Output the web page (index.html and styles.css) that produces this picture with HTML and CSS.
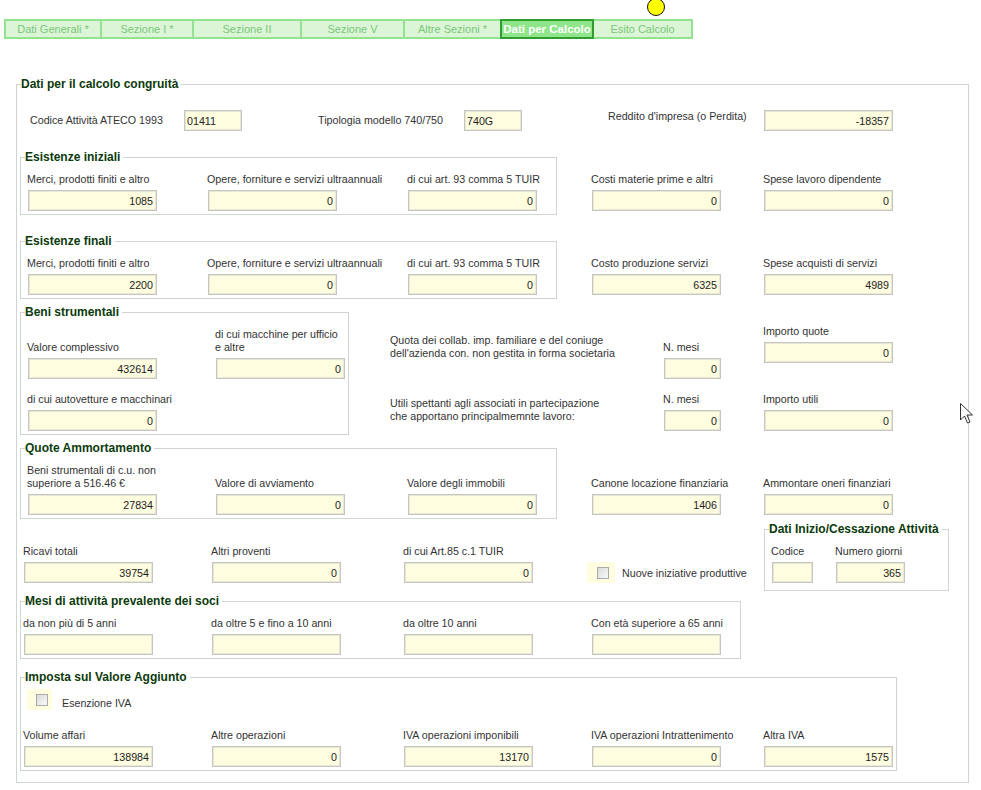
FILE: index.html
```html
<!DOCTYPE html>
<html lang="it">
<head>
<meta charset="utf-8">
<title>Dati per Calcolo</title>
<link rel="stylesheet" href="styles.css">
</head>
<body>
<div class="page">
  <nav class="tabs">
    <span class="tab w1">Dati Generali *</span>
    <span class="tab w2">Sezione I *</span>
    <span class="tab w3">Sezione II</span>
    <span class="tab w4">Sezione V</span>
    <span class="tab w5">Altre Sezioni *</span>
    <span class="tab w6 active">Dati per Calcolo</span>
    <span class="tab w7">Esito Calcolo</span>
  </nav>
  <span class="dot"></span>

  <fieldset class="main">
    <legend>Dati per il calcolo congruità</legend>

    <div class="toprow">
      <span class="tl">Codice Attività ATECO 1993</span>
      <input class="v sm left" value="01411" readonly>
      <span class="tl">Tipologia modello 740/750</span>
      <input class="v sm left" value="740G" readonly>
      <span class="tl up">Reddito d'impresa (o Perdita)</span>
      <input class="v" value="-18357" readonly>
    </div>

    <div class="band b-ei">
      <fieldset class="grp g-wide">
        <legend>Esistenze iniziali</legend>
        <div class="cols c-esist">
          <div class="fld"><label>Merci, prodotti finiti e altro</label><input class="v" value="1085" readonly></div>
          <div class="fld"><label>Opere, forniture e servizi ultraannuali</label><input class="v" value="0" readonly></div>
          <div class="fld"><label>di cui art. 93 comma 5 TUIR</label><input class="v" value="0" readonly></div>
        </div>
      </fieldset>
      <div class="side">
        <div class="fld"><label>Costi materie prime e altri</label><input class="v" value="0" readonly></div>
        <div class="fld"><label>Spese lavoro dipendente</label><input class="v" value="0" readonly></div>
      </div>
    </div>

    <div class="band b-ef">
      <fieldset class="grp g-wide">
        <legend>Esistenze finali</legend>
        <div class="cols c-esist">
          <div class="fld"><label>Merci, prodotti finiti e altro</label><input class="v" value="2200" readonly></div>
          <div class="fld"><label>Opere, forniture e servizi ultraannuali</label><input class="v" value="0" readonly></div>
          <div class="fld"><label>di cui art. 93 comma 5 TUIR</label><input class="v" value="0" readonly></div>
        </div>
      </fieldset>
      <div class="side">
        <div class="fld"><label>Costo produzione servizi</label><input class="v" value="6325" readonly></div>
        <div class="fld"><label>Spese acquisti di servizi</label><input class="v" value="4989" readonly></div>
      </div>
    </div>

    <div class="band b-beni">
      <fieldset class="grp g-beni">
        <legend>Beni strumentali</legend>
        <div class="cols c-beni">
          <div class="fld"><label>Valore complessivo</label><input class="v" value="432614" readonly></div>
          <div class="fld"><label class="l2">di cui macchine per ufficio<br>e altre</label><input class="v" value="0" readonly></div>
          <div class="fld"><label>di cui autovetture e macchinari</label><input class="v" value="0" readonly></div>
        </div>
      </fieldset>
      <div class="beni-r">
        <p class="note n1">Quota dei collab. imp. familiare e del coniuge<br>dell'azienda con. non gestita in forma societaria</p>
        <div class="fld nm1"><label>N. mesi</label><input class="v xs" value="0" readonly></div>
        <div class="fld"><label>Importo quote</label><input class="v" value="0" readonly></div>
        <p class="note n2">Utili spettanti agli associati in partecipazione<br>che apportano principalmemnte lavoro:</p>
        <div class="fld"><label>N. mesi</label><input class="v xs" value="0" readonly></div>
        <div class="fld"><label>Importo utili</label><input class="v" value="0" readonly></div>
      </div>
    </div>

    <div class="band b-quote">
      <fieldset class="grp g-wide">
        <legend>Quote Ammortamento</legend>
        <div class="cols c-quote">
          <div class="fld"><label>Beni strumentali di c.u. non<br>superiore a 516.46 €</label><input class="v" value="27834" readonly></div>
          <div class="fld"><label>Valore di avviamento</label><input class="v" value="0" readonly></div>
          <div class="fld"><label>Valore degli immobili</label><input class="v" value="0" readonly></div>
        </div>
      </fieldset>
      <div class="side">
        <div class="fld"><label>Canone locazione finanziaria</label><input class="v" value="1406" readonly></div>
        <div class="fld"><label>Ammontare oneri finanziari</label><input class="v" value="0" readonly></div>
      </div>
    </div>

    <div class="band b-r">
      <div class="rleft">
        <div class="fld"><label>Ricavi totali</label><input class="v" value="39754" readonly></div>
        <div class="fld"><label>Altri proventi</label><input class="v" value="0" readonly></div>
        <div class="fld"><label>di cui Art.85 c.1 TUIR</label><input class="v" value="0" readonly></div>
        <div class="chk">
          <span class="cbox"><input type="checkbox" class="cb"></span>
          <span class="chk-t">Nuove iniziative produttive</span>
        </div>
      </div>
      <fieldset class="grp g-dati">
        <legend>Dati Inizio/Cessazione Attività</legend>
        <div class="cols c-dati">
          <div class="fld"><label>Codice</label><input class="v cod" value="" readonly></div>
          <div class="fld"><label>Numero giorni</label><input class="v ng" value="365" readonly></div>
        </div>
      </fieldset>
    </div>

    <div class="band b-mesi">
      <fieldset class="grp g-mesi">
        <legend>Mesi di attività prevalente dei soci</legend>
        <div class="cols c-mesi">
          <div class="fld"><label>da non più di 5 anni</label><input class="v" value="" readonly></div>
          <div class="fld"><label>da oltre 5 e fino a 10 anni</label><input class="v" value="" readonly></div>
          <div class="fld"><label>da oltre 10 anni</label><input class="v" value="" readonly></div>
          <div class="fld"><label>Con età superiore a 65 anni</label><input class="v" value="" readonly></div>
        </div>
      </fieldset>
    </div>

    <div class="band b-iva">
      <fieldset class="grp g-iva">
        <legend>Imposta sul Valore Aggiunto</legend>
        <div class="chkrow">
          <span class="cbox cbox-iva"><input type="checkbox" class="cb"></span>
          <span class="chk-iva">Esenzione IVA</span>
        </div>
        <div class="cols c-iva">
          <div class="fld"><label>Volume affari</label><input class="v" value="138984" readonly></div>
          <div class="fld"><label>Altre operazioni</label><input class="v" value="0" readonly></div>
          <div class="fld"><label>IVA operazioni imponibili</label><input class="v" value="13170" readonly></div>
          <div class="fld"><label>IVA operazioni Intrattenimento</label><input class="v" value="0" readonly></div>
          <div class="fld"><label>Altra IVA</label><input class="v" value="1575" readonly></div>
        </div>
      </fieldset>
    </div>
  </fieldset>

  <svg class="cursor" width="15" height="23" viewBox="0 0 15 23" aria-hidden="true">
    <polygon points="1.5,1.5 1.5,18 5.5,14 8.5,21 11,20 8,13 13.5,13" fill="#fff" stroke="#333" stroke-width="1" stroke-linejoin="miter"/>
  </svg>
</div>
</body>
</html>
```

FILE: styles.css
```css
* { box-sizing: border-box; }

body {
  margin: 0;
  background: #fff;
  font-family: "Liberation Sans", Arial, sans-serif;
  font-size: 10.7px;
  color: #333;
}

.page {
  position: relative;
  width: 981px;
  height: 790px;
  overflow: hidden;
}

/* tabs */
.tabs {
  display: flex;
  margin: 19px 0 0 4px;
  height: 20px;
}
.tab {
  height: 20px;
  border: 2px solid #93e28f;
  background: #dcf5d7;
  color: #77c877;
  font-size: 11px;
  line-height: 16px;
  text-align: center;
  white-space: nowrap;
  overflow: hidden;
}
.tab + .tab { margin-left: -2px; }
.tab.active {
  position: relative;
  z-index: 1;
  background: #8fe68a;
  border-color: #2f9e2f;
  color: #fff;
  font-weight: bold;
  font-size: 11.5px;
}
.w1 { width: 98px; }
.w2 { width: 94px; }
.w3 { width: 110px; }
.w4 { width: 105px; }
.w5 { width: 99px; }
.w6 { width: 94px; }
.w7 { width: 101px; }

.dot {
  position: absolute;
  left: 647px;
  top: -2px;
  width: 18px;
  height: 18px;
  border-radius: 50%;
  background: #ffff00;
  border: 1.5px solid #111;
}

.cursor {
  position: absolute;
  left: 959px;
  top: 402px;
}

/* fieldsets */
fieldset {
  margin: 0;
  min-width: 0;
  border: 1px solid #cfd6cf;
  padding: 9px 0 3px;
}
legend {
  margin-left: 4px;
  padding: 0 3px 0 0;
  font-weight: bold;
  font-size: 12px;
  line-height: 13px;
  color: #0b3a0b;
}
.main {
  margin: 39px 0 0 16px;
  width: 953px;
  padding: 0 0 11px;
}

/* inputs */
input.v {
  display: block;
  width: 129px;
  height: 21px;
  margin: 0;
  padding: 0 3px 0 2px;
  border: 1px solid #c6c6bf;
  box-shadow: inset 0 0 0 1px #e8e8d8;
  background: #fffde0;
  font-family: inherit;
  font-size: 10.7px;
  color: #1c1c1c;
  text-align: right;
  outline: none;
}
input.v.left { text-align: left; }
input.v.sm { width: 58px; }
input.v.xs { width: 57px; }
input.v.cod { width: 41px; }
input.v.ng { width: 69px; }

.fld label {
  display: block;
  line-height: 13px;
  margin: 0 0 4px -1px;
  white-space: nowrap;
}

.cols { display: grid; align-items: end; }

/* top row */
.toprow {
  display: grid;
  grid-template-columns: 154px 134px 146px 144px 156px 129px;
  align-items: center;
  margin: 19px 0 0 13px;
  height: 21px;
}
.tl { white-space: nowrap; line-height: 13px; }
.tl.up { align-self: start; }

/* bands */
.band { display: flex; margin-left: 3px; }
.b-ei { margin-top: 20px; }
.b-ef { margin-top: 20px; }
.b-beni { margin-top: 7px; }
.b-quote { margin-top: 7px; }
.b-r { margin-top: 4px; margin-left: 0; }
.b-mesi { margin-top: 4px; }
.b-iva { margin-top: 12px; }

.side {
  display: grid;
  grid-template-columns: 172px 129px;
  align-self: flex-end;
  margin: 0 0 4px 35px;
}

.g-wide { width: 537px; }
.c-esist { grid-template-columns: 180px 200px 129px; margin-left: 7px; }
.c-quote { grid-template-columns: 188px 192px 129px; margin-left: 7px; }

.g-beni { width: 329px; }
.c-beni {
  grid-template-columns: 188px 129px;
  row-gap: 14px;
  margin-left: 7px;
}

.beni-r {
  display: grid;
  grid-template-columns: 274px 100px 129px;
  align-items: start;
  row-gap: 14px;
  margin: 19px 0 0 41px;
  align-self: flex-start;
}
.note {
  margin: 0;
  line-height: 13px;
  white-space: nowrap;
}
.n1 { margin-top: 9px; }
.n2 { margin-top: 4px; }
.nm1 { margin-top: 16px; }

/* ricavi row */
.rleft {
  display: grid;
  grid-template-columns: 188px 192px 183px 177px;
  align-items: end;
  align-self: flex-end;
  margin: 0 0 8px 7px;
}
.chk {
  display: flex;
  align-items: center;
  height: 21px;
}
.cbox {
  display: flex;
  align-items: center;
  width: 28px;
  height: 21px;
  padding-left: 10px;
  background: #fffde0;
}
.chk-t { margin-left: 7px; white-space: nowrap; }
.cb {
  -webkit-appearance: none;
  appearance: none;
  margin: 0;
  width: 12px;
  height: 12px;
  border: 1px solid #a9a9a9;
  background: linear-gradient(135deg, #d9d9d9, #fbfbfb);
}

.g-dati { width: 185px; padding-bottom: 7px; }
.c-dati { grid-template-columns: 64px 69px; margin-left: 7px; }

/* mesi */
.g-mesi { width: 721px; }
.c-mesi { grid-template-columns: 188px 192px 188px 129px; margin-left: 3px; }

/* iva */
.g-iva { width: 877px; padding-top: 5px; }
.chkrow {
  display: flex;
  align-items: flex-start;
  margin-left: 6px;
  height: 21px;
}
.cbox-iva { width: 25px; padding-left: 9px; }
.chk-iva { margin: 8px 0 0 10px; line-height: 13px; white-space: nowrap; }
.c-iva {
  grid-template-columns: 188px 192px 188px 172px 129px;
  margin: 19px 0 0 3px;
}
```
